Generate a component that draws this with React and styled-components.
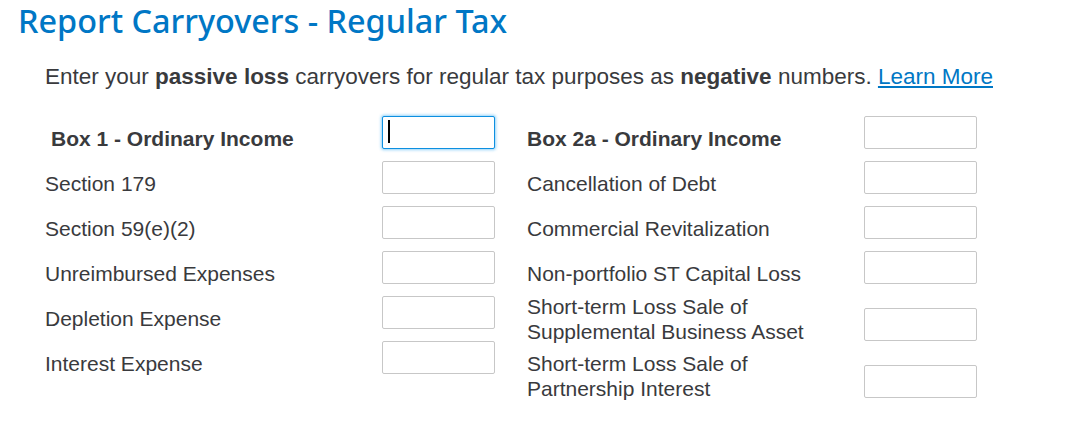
import React from "react";
import styled, { createGlobalStyle } from "styled-components";

const GlobalStyle = createGlobalStyle`
  body {
    margin: 0;
    background: #ffffff;
    font-family: "Liberation Sans", Arial, sans-serif;
    color: #393a3d;
  }
`;

const leftRows = [
  { label: "Box 1 - Ordinary Income", header: true, indent: true, focused: true },
  { label: "Section 179" },
  { label: "Section 59(e)(2)" },
  { label: "Unreimbursed Expenses" },
  { label: "Depletion Expense" },
  { label: "Interest Expense" },
];

const rightRows = [
  { label: "Box 2a - Ordinary Income", header: true },
  { label: "Cancellation of Debt" },
  { label: "Commercial Revitalization" },
  { label: "Non-portfolio ST Capital Loss" },
  { label: "Short-term Loss Sale of Supplemental Business Asset", tall: true },
  { label: "Short-term Loss Sale of Partnership Interest", tall: true },
];

const FieldColumn = ({ rows }) => (
  <Column>
    {rows.map((row) => (
      <Row key={row.label} $tall={row.tall}>
        <Label $header={row.header} $indent={row.indent} $tall={row.tall}>
          {row.label}
        </Label>
        <InputWrap $tall={row.tall}>
          <Input type="text" $focused={row.focused} />
          {row.focused && <Caret />}
        </InputWrap>
      </Row>
    ))}
  </Column>
);

const App = () => {
  return (
    <Page>
      <GlobalStyle />
      <Title>Report Carryovers - Regular Tax</Title>
      <Content>
        <Intro>
          Enter your <b>passive loss</b> carryovers for regular tax purposes as{" "}
          <b>negative</b> numbers. <Link href="#">Learn More</Link>
        </Intro>
        <Columns>
          <FieldColumn rows={leftRows} />
          <FieldColumn rows={rightRows} />
        </Columns>
      </Content>
    </Page>
  );
};

const Page = styled.div`
  padding: 0 0 0 18px;
`;

const Title = styled.h1`
  margin: 0;
  font-family: "Noto Sans", "Open Sans", sans-serif;
  font-weight: 500;
  font-size: 32.4px;
  line-height: 40px;
  color: #0077c5;
`;

const Content = styled.div`
  padding: 23px 0 0 27px;
`;

const Intro = styled.p`
  margin: 0;
  font-size: 22.5px;
  line-height: 28px;
  color: #393a3d;

  b {
    font-weight: 700;
  }
`;

const Link = styled.a`
  color: #0077c5;
  text-decoration: underline;
`;

const Columns = styled.div`
  display: flex;
  gap: 32px;
  margin-top: 25px;
`;

const Column = styled.div`
  display: flex;
  flex-direction: column;
`;

const Row = styled.div`
  display: grid;
  grid-template-columns: 337px 113px;
  align-items: start;
  height: ${(p) => (p.$tall ? "57px" : "45px")};
`;

const Label = styled.div`
  margin-top: ${(p) => (p.$tall ? "-2px" : "10px")};
  padding-left: ${(p) => (p.$indent ? "6px" : "0")};
  font-size: 21px;
  line-height: 25px;
  font-weight: ${(p) => (p.$header ? 700 : 400)};
  width: ${(p) => (p.$tall ? "300px" : "auto")};
`;

const InputWrap = styled.div`
  position: relative;
  margin-top: ${(p) => (p.$tall ? "12px" : "0")};
`;

const Input = styled.input`
  display: block;
  box-sizing: border-box;
  width: 113px;
  height: 33px;
  margin: 0;
  padding: 0 6px;
  border: 1px solid ${(p) => (p.$focused ? "#0d8fe0" : "#c7c7c7")};
  border-radius: 2px;
  background: #fff;
  font-family: "Liberation Sans", Arial, sans-serif;
  font-size: 20px;
  outline: none;
  box-shadow: ${(p) => (p.$focused ? "0 0 3px 1px rgba(13, 155, 242, 0.45)" : "none")};
`;

const Caret = styled.span`
  position: absolute;
  left: 6px;
  top: 4px;
  width: 2px;
  height: 23px;
  background: #000;
`;

export default App;
